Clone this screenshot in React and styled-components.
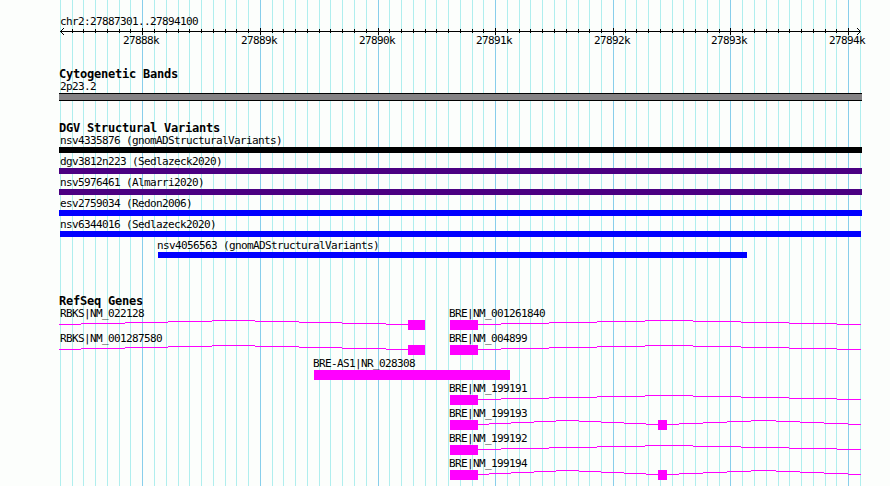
import React from 'react'
import styled, { createGlobalStyle } from 'styled-components'

const GlobalStyle = createGlobalStyle`
  body {
    margin: 0;
    background: #fcfefc;
  }
`

const Browser = styled.div`
  position: relative;
  box-sizing: border-box;
  width: 890px;
  height: 486px;
  padding-top: 15px;
  overflow: hidden;
  color: #000;
  font: 11px/13px 'DejaVu Sans Mono', monospace;
`

const Gridlines = styled.svg`
  position: absolute;
  top: 0;
  left: 0;
`

const Content = styled.div`
  position: relative;
  display: flex;
  flex-direction: column;
`

const Label = styled.div`
  height: 13px;
  line-height: 13px;
  white-space: nowrap;
  letter-spacing: calc(6px - 1ch);
`

const Region = styled(Label)`
  padding-left: 60px;
`

const RulerAxis = styled.svg`
  display: block;
  font: 11px 'DejaVu Sans Mono', monospace;
  letter-spacing: calc(6px - 1ch);
`

const Track = styled.section`
  margin-top: ${p => p.$gap}px;
`

const TrackTitle = styled.h2`
  height: 12px;
  margin: 0;
  padding-left: 59px;
  font-size: 12px;
  line-height: 12px;
  font-weight: 700;
  white-space: nowrap;
  letter-spacing: calc(7px - 1ch);
`

const Row = styled.div`
  display: flex;
  height: ${p => p.$height}px;
`

const Feature = styled.div`
  flex: none;
  width: ${p => p.$width}px;
  margin-left: ${p => p.$offset}px;
`

const FeatureLabel = styled(Label)`
  margin-left: ${p => p.$indent}px;
`

const Band = styled.div`
  box-sizing: border-box;
  height: 8px;
  border: solid #000;
  border-width: 1px 0;
  background: #848284;
`

const Variant = styled.div`
  height: 6px;
  background: ${p => p.$color};
`

const GeneModel = styled.svg`
  display: block;
  fill: #ff00ff;
`

const START = 27887301
const SCALE = 800 / 6800
const toX = pos => Math.round(60 + (pos - START) * SCALE)

const ticks = Array.from({ length: 69 }, (_, i) => {
  const pos = 27887300 + i * 100
  return { pos, x: toX(pos), major: pos % 1000 === 0 }
})

const labelIndent = start => (start === 59 ? 1 : start === 60 ? 0 : -1)

const variants = [
  { name: 'nsv4335876 (gnomADStructuralVariants)', start: 59, end: 862, color: '#000' },
  { name: 'dgv3812n223 (Sedlazeck2020)', start: 59, end: 862, color: '#4b0082' },
  { name: 'nsv5976461 (Almarri2020)', start: 59, end: 862, color: '#4b0082' },
  { name: 'esv2759034 (Redon2006)', start: 59, end: 862, color: '#0000ff' },
  { name: 'nsv6344016 (Sedlazeck2020)', start: 60, end: 861, color: '#0000ff' },
  { name: 'nsv4056563 (gnomADStructuralVariants)', start: 158, end: 747, color: '#0000ff' }
]

// each intron is a list of [x, y] steps, the last x closes it
const RBKS_INTRON = [
  [59, 4], [81, 3], [125, 2], [168, 1], [212, 0],
  [255, 1], [299, 2], [342, 3], [386, 4], [408]
]
const LONG_INTRON = [
  [478, 4], [501, 3], [549, 2], [597, 1], [645, 0],
  [693, 1], [741, 2], [789, 3], [837, 4], [861]
]
const SHORT_INTRON = [
  [478, 4], [489, 3], [511, 2], [534, 1], [556, 0],
  [579, 1], [601, 2], [624, 3], [646, 4], [658]
]
const TAIL_INTRON = [
  [667, 4], [679, 3], [703, 2], [727, 1], [751, 0],
  [776, 1], [800, 2], [824, 3], [848, 4], [861]
]

const rbks = name => ({
  name, start: 59, end: 425, exons: [[408, 425]], introns: [RBKS_INTRON]
})
const bre = name => ({
  name, start: 450, end: 861, exons: [[450, 478]], introns: [LONG_INTRON]
})
const breSpliced = name => ({
  name,
  start: 450,
  end: 861,
  exons: [[450, 478], [658, 667]],
  introns: [SHORT_INTRON, TAIL_INTRON]
})

const geneRows = [
  [rbks('RBKS|NM_022128'), bre('BRE|NM_001261840')],
  [rbks('RBKS|NM_001287580'), bre('BRE|NM_004899')],
  [{ name: 'BRE-AS1|NR_028308', start: 314, end: 510, exons: [[314, 510]], introns: [] }],
  [bre('BRE|NM_199191')],
  [breSpliced('BRE|NM_199193')],
  [bre('BRE|NM_199192')],
  [breSpliced('BRE|NM_199194')]
]

const Ruler = () => (
  <RulerAxis width='890' height='23'>
    <g shapeRendering='crispEdges'>
      <rect x='60' y='3' width='801' height='1' />
      {ticks.slice(1, -1).map(({ pos, x, major }) => (
        <rect key={pos} x={x} y={major ? 0 : 1} width='1' height={major ? 7 : 4} />
      ))}
      <path d='M61 2h1v1h-1zM62 1h1v1h-1zM63 0h1v1h-1zM61 4h1v1h-1zM62 5h1v1h-1zM63 6h1v1h-1z' />
      <path d='M859 2h1v1h-1zM858 1h1v1h-1zM857 0h1v1h-1zM859 4h1v1h-1zM858 5h1v1h-1zM857 6h1v1h-1z' />
    </g>
    {ticks.filter(t => t.major).map(({ pos, x }) => (
      <text key={pos} x={x - 19} y='16'>{`${pos / 1000}k`}</text>
    ))}
  </RulerAxis>
)

const Gene = ({ gene, offset }) => {
  const { name, start, end, exons, introns } = gene
  return (
    <Feature $width={end - start} $offset={offset}>
      <FeatureLabel $indent={labelIndent(start)}>{name}</FeatureLabel>
      <GeneModel
        width={end - start}
        height='10'
        viewBox={`${start} 0 ${end - start} 10`}
        shapeRendering='crispEdges'
      >
        {introns.map(steps =>
          steps.slice(0, -1).map(([x, y], i) => (
            <rect key={x} x={x} y={y} width={steps[i + 1][0] - x} height='1' />
          ))
        )}
        {exons.map(([from, to]) => (
          <rect key={from} x={from} y='0' width={to - from} height='10' />
        ))}
      </GeneModel>
    </Feature>
  )
}

const App = () => (
  <>
    <GlobalStyle />
    <Browser>
      <Gridlines width='890' height='486' shapeRendering='crispEdges'>
        {ticks.map(({ pos, x, major }) => (
          <rect
            key={pos}
            x={x}
            y='0'
            width='1'
            height='486'
            fill={major ? '#87ceeb' : '#afeeee'}
          />
        ))}
      </Gridlines>
      <Content>
        <Region>chr2:27887301..27894100</Region>
        <Ruler />
        <Track $gap={17}>
          <TrackTitle>Cytogenetic Bands</TrackTitle>
          <Row $height={25}>
            <Feature $width={803} $offset={59}>
              <FeatureLabel $indent={1}>2p23.2</FeatureLabel>
              <Band />
            </Feature>
          </Row>
        </Track>
        <Track $gap={17}>
          <TrackTitle>DGV Structural Variants</TrackTitle>
          {variants.map(({ name, start, end, color }) => (
            <Row key={name} $height={21}>
              <Feature $width={end - start} $offset={start}>
                <FeatureLabel $indent={labelIndent(start)}>{name}</FeatureLabel>
                <Variant $color={color} />
              </Feature>
            </Row>
          ))}
        </Track>
        <Track $gap={35}>
          <TrackTitle>RefSeq Genes</TrackTitle>
          {geneRows.map(row => (
            <Row key={row[0].name} $height={25}>
              {row.map((gene, i) => (
                <Gene
                  key={gene.name}
                  gene={gene}
                  offset={gene.start - (i ? row[i - 1].end : 0)}
                />
              ))}
            </Row>
          ))}
        </Track>
      </Content>
    </Browser>
  </>
)

export default App
